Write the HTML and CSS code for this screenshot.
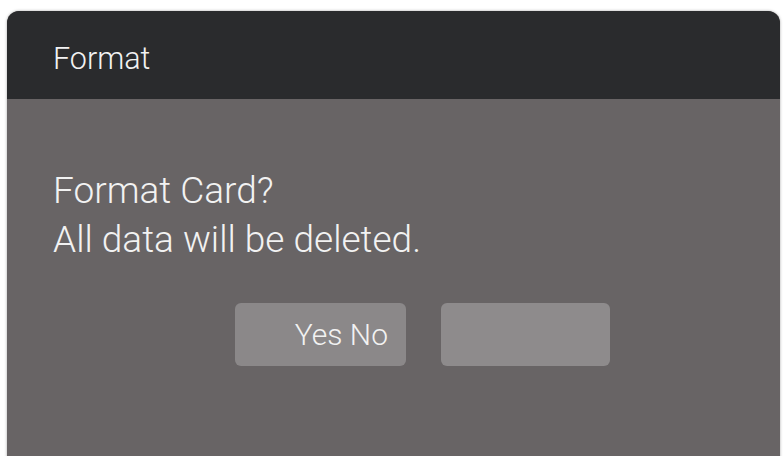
FILE: index.html
```html
<!DOCTYPE html>
<html>
<head>
<meta charset="utf-8">
<link rel="stylesheet" href="styles.css">
</head>
<body>
<div class="dialog">
  <div class="header">Format</div>
  <div class="content">
    <p class="message">Format Card?<br>All data will be deleted.</p>
    <div class="buttons">
      <div class="btn btn-yes">Yes No</div>
      <div class="btn btn-no"></div>
    </div>
  </div>
</div>
</body>
</html>
```

FILE: styles.css
```css
html, body {
  margin: 0;
  padding: 0;
  background: #ffffff;
  height: 100%;
  overflow: hidden;
}
body {
  font-family: Roboto, "Liberation Sans", sans-serif;
  font-weight: 300;
  color: #f2f2f2;
}
.dialog {
  margin: 11px 4px 0 7px;
  height: 460px;
  border-radius: 12px 12px 0 0;
  background: #686465;
  overflow: hidden;
  box-shadow: 0 0 3px rgba(0,0,0,0.35);
  display: flex;
  flex-direction: column;
}
.header {
  height: 88px;
  box-sizing: border-box;
  background: #2a2b2d;
  padding: 30px 0 0 46px;
  font-size: 30.5px;
  line-height: 35px;
}
.content {
  padding: 67px 0 0 46px;
}
.message {
  margin: 0;
  font-size: 37px;
  line-height: 49px;
}
.buttons {
  display: flex;
  gap: 35px;
  margin-top: 39px;
  padding-left: 182px;
}
.btn {
  width: 171px;
  height: 63px;
  border-radius: 6px;
  background: #8b8889;
  box-sizing: border-box;
  display: flex;
  align-items: center;
  justify-content: flex-end;
  padding-right: 18px;
  font-size: 30px;
  line-height: 35px;
}
.btn-no {
  width: 169px;
  background: #8e8b8c;
}
```
